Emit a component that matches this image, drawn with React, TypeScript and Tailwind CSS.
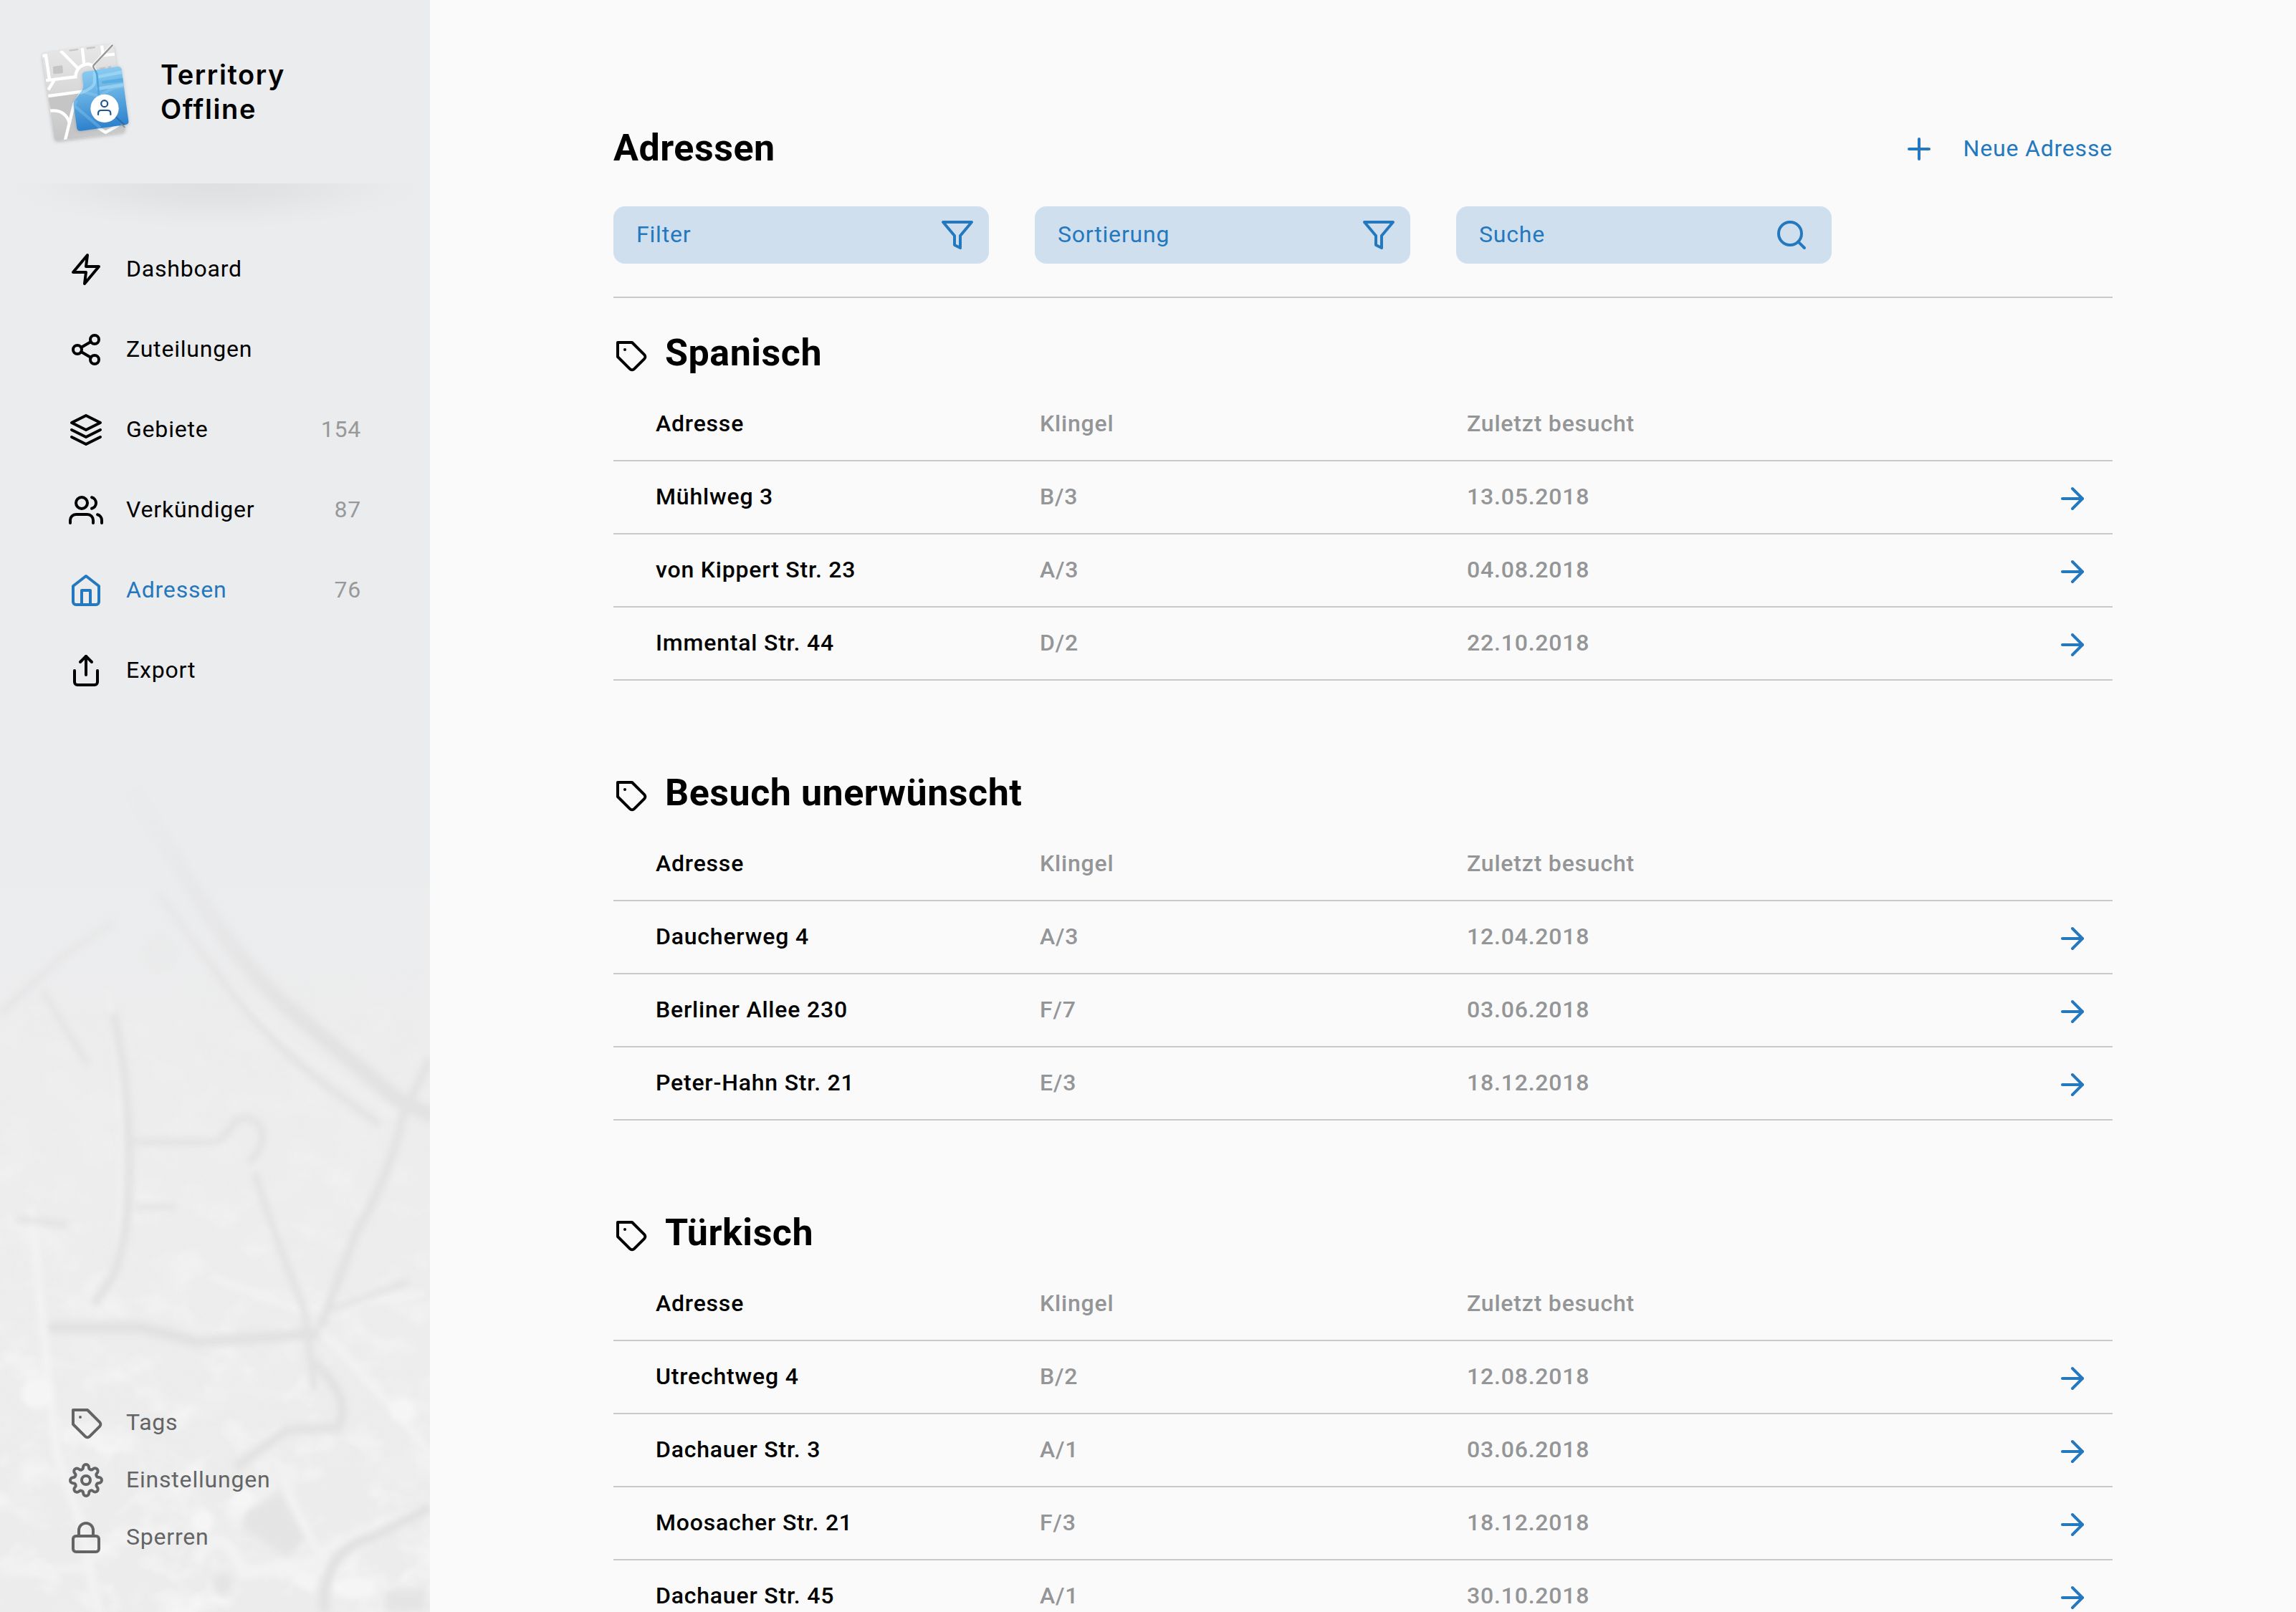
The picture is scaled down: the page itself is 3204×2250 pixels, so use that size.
import type { ReactNode } from "react";
import type { IconType } from "react-icons";
import {
  FiArrowRight,
  FiFilter,
  FiHome,
  FiLayers,
  FiLock,
  FiPlus,
  FiSearch,
  FiSettings,
  FiShare,
  FiShare2,
  FiUsers,
  FiZap,
} from "react-icons/fi";

type NavEntry = { icon: IconType; label: string; count?: number; active?: boolean };

const navigation: NavEntry[] = [
  { icon: FiZap, label: "Dashboard" },
  { icon: FiShare2, label: "Zuteilungen" },
  { icon: FiLayers, label: "Gebiete", count: 154 },
  { icon: FiUsers, label: "Verkündiger", count: 87 },
  { icon: FiHome, label: "Adressen", count: 76, active: true },
  { icon: FiShare, label: "Export" },
];

type Address = { street: string; bell: string; visited: string };

const groups: { title: string; rows: Address[] }[] = [
  {
    title: "Spanisch",
    rows: [
      { street: "Mühlweg 3", bell: "B/3", visited: "13.05.2018" },
      { street: "von Kippert Str. 23", bell: "A/3", visited: "04.08.2018" },
      { street: "Immental Str. 44", bell: "D/2", visited: "22.10.2018" },
    ],
  },
  {
    title: "Besuch unerwünscht",
    rows: [
      { street: "Daucherweg 4", bell: "A/3", visited: "12.04.2018" },
      { street: "Berliner Allee 230", bell: "F/7", visited: "03.06.2018" },
      { street: "Peter-Hahn Str. 21", bell: "E/3", visited: "18.12.2018" },
    ],
  },
  {
    title: "Türkisch",
    rows: [
      { street: "Utrechtweg 4", bell: "B/2", visited: "12.08.2018" },
      { street: "Dachauer Str. 3", bell: "A/1", visited: "03.06.2018" },
      { street: "Moosacher Str. 21", bell: "F/3", visited: "18.12.2018" },
      { street: "Dachauer Str. 45", bell: "A/1", visited: "30.10.2018" },
    ],
  },
];

function TagIcon({ className = "" }: { className?: string }) {
  return (
    <svg
      className={`size-12 shrink-0 ${className}`}
      viewBox="-1 -1 24 24"
      fill="none"
      stroke="currentColor"
      strokeWidth="2"
      strokeLinecap="round"
      strokeLinejoin="round"
    >
      <path d="M20.59 13.41l-7.17 7.17a2 2 0 0 1-2.83 0L2 12V2h10l8.59 8.59a2 2 0 0 1 0 2.82z" />
      <path d="M7 7h.01" />
    </svg>
  );
}

function Logo() {
  return (
    <svg className="h-[180px] w-[160px] shrink-0" viewBox="0 0 480 540" fill="none">
      <defs>
        <linearGradient id="mapFill" x1="0" y1="80" x2="0" y2="470" gradientUnits="userSpaceOnUse">
          <stop offset="0" stopColor="#e6e6e6" />
          <stop offset="0.35" stopColor="#dcdcdc" />
          <stop offset="1" stopColor="#c5c5c6" />
        </linearGradient>
        <linearGradient id="blueFill" x1="290" y1="165" x2="325" y2="420" gradientUnits="userSpaceOnUse">
          <stop offset="0" stopColor="#8ccbf1" />
          <stop offset="0.35" stopColor="#6cb5e5" />
          <stop offset="1" stopColor="#2b7fcb" />
        </linearGradient>
        <clipPath id="mapClip">
          <path d="M73 101 L342 66 Q354 64 356 77 L404 417 Q406 432 392 434 L124 468 Q109 470 107 456 L58 117 Q56 103 73 101Z" />
        </clipPath>
        <clipPath id="blueClip">
          <path d="M238 180 L372 159 Q386 158 389 171 L418 386 Q420 400 406 402 L218 428 Q205 430 202 417 L188 318 Q187 306 194 298 L222 262 Q230 250 229 238 L224 196 Q224 183 238 180Z" />
        </clipPath>
        <filter id="mapShadow" x="-20%" y="-20%" width="140%" height="150%">
          <feDropShadow dx="0" dy="5" stdDeviation="8" floodColor="#000" floodOpacity="0.22" />
        </filter>
        <filter id="blueShadow" x="-20%" y="-20%" width="140%" height="140%">
          <feDropShadow dx="0" dy="2" stdDeviation="6" floodColor="#2a5f92" floodOpacity="0.3" />
        </filter>
      </defs>
      <path
        filter="url(#mapShadow)"
        fill="url(#mapFill)"
        d="M73 101 L342 66 Q354 64 356 77 L404 417 Q406 432 392 434 L124 468 Q109 470 107 456 L58 117 Q56 103 73 101Z"
      />
      <g clipPath="url(#mapClip)">
        <path d="M80 290 L220 268 L190 306 L208 432 L160 462 L170 400 Q150 340 95 345Z" fill="#c5c5c5" />
        <path d="M106 158 L138 154 Q142 154 142 158 L144 182 Q144 186 140 187 L108 190 Q104 190 103 186 L102 162 Q102 159 106 158Z" fill="#c4c4c4" />
        <path d="M168 84 L207 80 V90 L170 95Z M241 75 L278 72 V82 L243 86Z" fill="#c6c6c6" />
        <path d="M296 164 L320 160 V172 L300 175Z M332 158 L345 156 V168 L334 170Z" fill="#cacaca" />
        <g stroke="#fff" strokeWidth="13">
          <path d="M56 114 L72 112 L87 212" />
          <path d="M70 217 L202 201" />
          <path d="M106 217 L82 256 M74 283 L226 263" />
          <path d="M134 92 L206 166 M224 78 L232 150 M306 66 L311 110" />
          <path d="M196 200 Q200 154 246 148 Q262 148 276 162" />
          <path d="M304 112 L362 107" />
          <path d="M222 266 L190 316 L153 466" />
          <path d="M88 344 Q154 336 172 398" />
          <path d="M276 406 L322 434 L376 404" />
        </g>
      </g>
      <path
        filter="url(#blueShadow)"
        fill="url(#blueFill)"
        d="M238 180 L372 159 Q386 158 389 171 L418 386 Q420 400 406 402 L218 428 Q205 430 202 417 L188 318 Q187 306 194 298 L222 262 Q230 250 229 238 L224 196 Q224 183 238 180Z"
      />
      <g clipPath="url(#blueClip)">
        <g stroke="#a5dcf7" strokeOpacity="0.65" strokeWidth="13">
          <path d="M284 203 L400 180" />
          <path d="M286 252 L400 234" />
          <path d="M276 180 V225 Q272 250 215 270" />
        </g>
        <path d="M306 220 L396 206 V223 L308 231Z" fill="#58aee2" />
        <g stroke="#a5dcf7" strokeOpacity="0.28" strokeWidth="13">
          <path d="M222 262 L290 282 M300 280 L340 255 Q360 244 410 240" />
          <path d="M190 322 L300 415 M200 300 L180 340" />
        </g>
        <path d="M365 370 L404 406" stroke="#1e5c9c" strokeOpacity="0.6" strokeWidth="6" />
      </g>
      <path d="M352 66 L274 149 Q268 156 272 163 L280 176" stroke="#fff" strokeOpacity="0.8" strokeWidth="13" />
      <path d="M352 68 L274 151 Q268 157 272 164 L280 178" stroke="#969696" strokeWidth="7" />
      <path d="M278 174 Q286 186 287 200 L294 280" stroke="#4da5df" strokeWidth="8" />
      <path d="M386 398 L403 414" stroke="#8a8a8a" strokeWidth="5" />
      <circle cx="318" cy="334" r="59" fill="#fff" />
      <g stroke="#1c5790" strokeWidth="6.5" strokeLinecap="round">
        <circle cx="317" cy="314" r="13.5" />
        <path d="M291 360 V355 Q291 342 304 342 H330 Q343 342 343 355 V360" />
      </g>
    </svg>
  );
}

/* Faded city map behind the lower part of the sidebar. */
function SidebarMap() {
  return (
    <svg
      className="pointer-events-none absolute bottom-0 left-0 h-[1250px] w-[600px]"
      viewBox="0 0 1517 1568"
      preserveAspectRatio="none"
      fill="none"
      aria-hidden="true"
    >
      <defs>
        <linearGradient id="fade" x1="0" y1="0" x2="0" y2="1">
          <stop offset="0.06" stopColor="#fff" stopOpacity="0" />
          <stop offset="0.2" stopColor="#fff" stopOpacity="0.35" />
          <stop offset="0.35" stopColor="#fff" stopOpacity="0.85" />
          <stop offset="0.75" stopColor="#fff" stopOpacity="1" />
        </linearGradient>
        <linearGradient id="wash" x1="0" y1="0" x2="0" y2="1">
          <stop offset="0.05" stopColor="#ededee" stopOpacity="0" />
          <stop offset="0.5" stopColor="#ededee" />
          <stop offset="1" stopColor="#ececec" />
        </linearGradient>
        <mask id="fadeMask">
          <rect width="1517" height="1568" fill="url(#fade)" />
        </mask>
        <linearGradient id="fadeLow" x1="0" y1="0" x2="0" y2="1">
          <stop offset="0.25" stopColor="#fff" stopOpacity="0" />
          <stop offset="0.9" stopColor="#fff" stopOpacity="1" />
        </linearGradient>
        <mask id="lowMask">
          <rect width="1517" height="1568" fill="url(#fadeLow)" />
        </mask>
        <filter id="soft" x="-5%" y="-5%" width="110%" height="110%">
          <feGaussianBlur stdDeviation="11 6" />
        </filter>
        <filter id="lightNoise" x="0" y="0" width="100%" height="100%">
          <feTurbulence type="fractalNoise" baseFrequency="0.007 0.017" numOctaves="3" seed="11" />
          <feColorMatrix values="0 0 0 0 0.97  0 0 0 0 0.97  0 0 0 0 0.97  3 0 0 0 -1.4" />
        </filter>
        <filter id="darkNoise" x="0" y="0" width="100%" height="100%">
          <feTurbulence type="fractalNoise" baseFrequency="0.006 0.014" numOctaves="3" seed="4" />
          <feColorMatrix values="0 0 0 0 0.88  0 0 0 0 0.88  0 0 0 0 0.885  3 0 0 0 -1.5" />
        </filter>
      </defs>
      <rect y="0" width="1517" height="1568" fill="url(#wash)" />
      <g mask="url(#lowMask)">
        <rect width="1517" height="1568" filter="url(#lightNoise)" opacity="0.55" />
        <rect width="1517" height="1568" filter="url(#darkNoise)" opacity="0.45" />
      </g>
      <g mask="url(#fadeMask)">
        <g filter="url(#soft)">
          <g stroke="#f2f2f3">
            <path vectorEffect="non-scaling-stroke" strokeWidth="6" d="M380 480 Q430 650 425 760 Q430 900 390 1000" />
            <path vectorEffect="non-scaling-stroke" strokeWidth="13" d="M110 860 L150 1060 L200 1290 L290 1420 L345 1568" />
            <path vectorEffect="non-scaling-stroke" strokeWidth="12" d="M1120 1070 L1240 1130 L1420 1230 L1517 1290" />
            <path vectorEffect="non-scaling-stroke" strokeWidth="12" d="M1000 1330 Q1080 1450 1180 1490 M1140 1460 L1480 1385" />
            <path vectorEffect="non-scaling-stroke" strokeWidth="18" d="M690 1480 Q780 1400 860 1500 L1130 1480" />
            <path vectorEffect="non-scaling-stroke" strokeWidth="10" d="M0 1500 L330 1490 M740 980 L1060 1040 L1500 1010 M1180 1520 L1350 1510 L1390 1568" />
          </g>
          <g stroke="#f0f0f1">
            <path vectorEffect="non-scaling-stroke" strokeWidth="7" d="M800 460 Q900 530 1080 592 L1400 705" />
          </g>
          <g stroke="#e1e1e2">
            <path vectorEffect="non-scaling-stroke" strokeWidth="22" d="M470 130 L680 300 Q850 440 1040 520 L1400 670 L1530 700" />
            <path vectorEffect="non-scaling-stroke" strokeWidth="9" d="M560 310 Q720 420 860 510 Q1000 590 1160 650 L1340 715" />
            <path vectorEffect="non-scaling-stroke" strokeWidth="7" d="M0 520 L220 420 L400 360 M150 480 L310 610" />
            <path vectorEffect="non-scaling-stroke" strokeWidth="12" d="M400 520 Q460 660 455 780 Q460 900 400 980 L330 1030" />
            <path vectorEffect="non-scaling-stroke" strokeWidth="9" d="M470 745 H760 Q800 735 820 715 Q860 690 915 715 Q950 745 880 780" />
            <path vectorEffect="non-scaling-stroke" strokeWidth="9" d="M900 800 Q960 900 1075 1040 L1110 1180" />
            <path vectorEffect="non-scaling-stroke" strokeWidth="12" d="M1517 600 L1420 700 Q1380 800 1260 900 L1130 1070" />
            <path vectorEffect="non-scaling-stroke" strokeWidth="16" d="M170 1070 L500 1070 L700 1095 L1130 1080" />
            <path vectorEffect="non-scaling-stroke" strokeWidth="12" d="M830 1315 L1010 1250 L1190 1245 Q1250 1200 1110 1130" />
            <path vectorEffect="non-scaling-stroke" strokeWidth="14" d="M1517 1385 L1320 1435 Q1130 1460 1145 1568" />
            <path vectorEffect="non-scaling-stroke" strokeWidth="8" d="M60 880 L240 890 M480 860 L620 858 M1160 1040 L1440 990" />
          </g>
          <g fill="#e4e4e4">
            <path d="M870 1390 L990 1360 L1080 1440 L1010 1470 L860 1420Z" />
            <ellipse cx="785" cy="1520" rx="32" ry="20" />
            <path d="M1360 1530 H1500 V1568 H1360Z" />
            <ellipse cx="565" cy="415" rx="55" ry="30" opacity="0.3" />
          </g>
          <g fill="#f5f5f5">
            <ellipse cx="715" cy="1410" rx="40" ry="22" />
            <ellipse cx="130" cy="1185" rx="55" ry="28" />
            <ellipse cx="860" cy="1370" rx="40" ry="18" />
            <ellipse cx="1250" cy="1525" rx="80" ry="20" />
            <ellipse cx="1420" cy="1215" rx="45" ry="22" />
          </g>
        </g>
      </g>
    </svg>
  );
}

function Sidebar() {
  return (
    <aside className="relative flex w-[600px] shrink-0 flex-col bg-[#ebeced]">
      <SidebarMap />
      <header className="relative flex h-64 shrink-0 gap-6 pt-10 pl-10">
        <Logo />
        <h1 className="pt-10 font-['Inter',sans-serif] text-[38px] leading-12 font-semibold tracking-[1.6px]">
          Territory
          <br />
          Offline
        </h1>
      </header>
      <div className="relative h-16 shrink-0 bg-[radial-gradient(ellipse_290px_64px_at_50%_0%,#dedfe0_0%,#e2e3e4_40%,#e8e9ea_75%,#ebeced_100%)]" />
      <nav className="relative flex flex-col">
        {navigation.map(({ icon: Icon, label, count, active }) => (
          <a
            key={label}
            className={`flex h-28 items-center gap-8 pr-24 pl-24 ${active ? "text-[#2478be]" : "text-black"}`}
          >
            <Icon className="size-12 shrink-0" />
            <span className="pb-0.5">{label}</span>
            {count !== undefined && <span className="ml-auto pb-0.5 text-[#98999b]">{count}</span>}
          </a>
        ))}
      </nav>
      <nav className="relative mt-auto flex flex-col pb-16 text-[#636466]">
        <BottomLink icon={<TagIcon />}>Tags</BottomLink>
        <BottomLink icon={<FiSettings className="size-12" />}>Einstellungen</BottomLink>
        <BottomLink icon={<FiLock className="size-12" />}>Sperren</BottomLink>
      </nav>
    </aside>
  );
}

function BottomLink({ icon, children }: { icon: ReactNode; children: ReactNode }) {
  return (
    <a className="flex h-20 items-center gap-8 pl-24">
      {icon}
      <span className="pb-0.5">{children}</span>
    </a>
  );
}

function Control({ label, icon: Icon, inset }: { label: string; icon: IconType; inset: string }) {
  return (
    <button className={`flex h-20 w-[524px] items-center justify-between rounded-2xl bg-[#cfdfee] pl-8 ${inset}`}>
      <span className="pb-0.5">{label}</span>
      <Icon className="size-12" />
    </button>
  );
}

function AddressGroup({ title, rows }: { title: string; rows: Address[] }) {
  return (
    <section className="pb-20">
      <div className="flex h-[126px] gap-6 pt-[45px]">
        <TagIcon className="mt-[11px]" />
        <h3 className="text-[52px] leading-16 font-bold tracking-[0.52px]">{title}</h3>
      </div>
      <div className="font-medium tracking-[0.8px] text-[#949597]">
        <div className="grid h-[102px] grid-cols-[536px_596px_1fr] items-center border-b-2 border-[#c8c9cb] pl-[59px]">
          <span className="pb-0.5 text-black">Adresse</span>
          <span className="pb-0.5">Klingel</span>
          <span className="pb-0.5">Zuletzt besucht</span>
        </div>
        {rows.map((row) => (
          <div
            key={row.street}
            className="grid h-[102px] grid-cols-[536px_596px_1fr_48px] items-center border-b-2 border-[#c8c9cb] pr-8 pl-[59px]"
          >
            <span className="pb-0.5 text-black">{row.street}</span>
            <span className="pb-0.5">{row.bell}</span>
            <span className="pb-0.5">{row.visited}</span>
            <FiArrowRight className="mt-1 size-12 text-[#2478be]" />
          </div>
        ))}
      </div>
    </section>
  );
}

export default function App() {
  return (
    <div className="flex h-[2250px] w-[3204px] overflow-hidden bg-[#fafafa] font-['Roboto',sans-serif] text-[32px] leading-10 tracking-[0.8px] text-black">
      <Sidebar />
      <main className="ml-64 w-[2092px] pt-[175px]">
        <div className="flex items-center justify-between">
          <h2 className="text-[52px] leading-16 font-bold tracking-[0.52px]">Adressen</h2>
          <button className="flex items-center gap-[38px] text-[#2478be]">
            <FiPlus className="mt-0.5 size-12" />
            <span>Neue Adresse</span>
          </button>
        </div>
        <div className="mt-[49px] flex gap-16 text-[#2478be]">
          <Control label="Filter" icon={FiFilter} inset="pr-5" />
          <Control label="Sortierung" icon={FiFilter} inset="pr-5" />
          <Control label="Suche" icon={FiSearch} inset="pr-8" />
        </div>
        <div className="mt-[46px] h-0.5 bg-[#c8c9cb]" />
        {groups.map((group) => (
          <AddressGroup key={group.title} {...group} />
        ))}
      </main>
    </div>
  );
}
